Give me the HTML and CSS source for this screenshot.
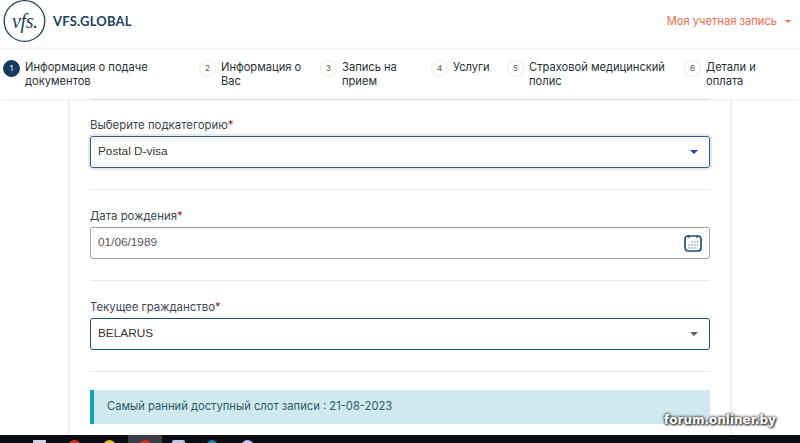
FILE: index.html
```html
<!DOCTYPE html>
<html lang="ru">
<head>
<meta charset="utf-8">
<title>VFS Global</title>
<link rel="stylesheet" href="styles.css">
</head>
<body>
<div class="viewport">
  <header class="topbar">
    <div class="brand">
      <svg class="logo" width="44" height="42" viewBox="0 0 44 42"><ellipse cx="21.5" cy="21" rx="20.3" ry="20.3" fill="none" stroke="#1d3f60" stroke-width="1.3"/></svg>
      <span class="logo-script">vfs.</span>
      <span class="brand-name">VFS.GLOBAL</span>
    </div>
    <div class="account">Моя учетная запись<i class="caret caret-orange"></i></div>
  </header>
  <nav class="stepper">
    <div class="step step1"><span class="num active">1</span><span class="lbl">Информация о подаче документов</span></div>
    <div class="step step2"><span class="num">2</span><span class="lbl">Информация о Вас</span></div>
    <div class="step step3"><span class="num">3</span><span class="lbl">Запись на прием</span></div>
    <div class="step step4"><span class="num">4</span><span class="lbl">Услуги</span></div>
    <div class="step step5"><span class="num">5</span><span class="lbl">Страховой медицинский полис</span></div>
    <div class="step step6"><span class="num">6</span><span class="lbl">Детали и оплата</span></div>
  </nav>
  <main class="card">
    <section class="field field-first">
      <label class="label">Выберите подкатегорию<b>*</b></label>
      <div class="control focused"><span class="value">Postal D-visa</span><i class="caret caret-blue"></i></div>
    </section>
    <section class="field">
      <label class="label">Дата рождения<b>*</b></label>
      <div class="control date"><span class="value">01/06/1989</span>
        <svg width="18" height="18" viewBox="0 0 18 18"><rect x="1" y="2" width="16" height="15" rx="3" fill="none" stroke="#1f4e7c" stroke-width="1.7"/><path d="M5 1v3M13 1v3" stroke="#1f4e7c" stroke-width="1.3"/><path d="M7.5 8h1M10.5 8h1M13 8h1M4.5 11h1M7.5 11h1M10.5 11h1M13 11h1M4.5 14h1M7.5 14h1M10.5 14h1" stroke="#5b7fa3" stroke-width="1.4"/></svg>
      </div>
    </section>
    <section class="field">
      <label class="label">Текущее гражданство<b>*</b></label>
      <div class="control solid"><span class="value">BELARUS</span><i class="caret caret-dark"></i></div>
    </section>
    <div class="alert">Самый ранний доступный слот записи : 21-08-2023</div>
  </main>
  <footer class="taskbar">
    <i class="tb tb1"></i><i class="tb tb2"></i><i class="tb tb3"></i><span class="tb-active"><i class="tb tb4"></i></span><i class="tb tb5"></i><i class="tb tb6"></i><i class="tb tb7"></i>
  </footer>
  <div class="watermark">forum.onliner.by</div>
</div>
</body>
</html>
```
FILE: styles.css
```css
* { box-sizing: border-box; }
html, body { margin: 0; padding: 0; background: #fff; }
.viewport { width: 800px; height: 443px; overflow: hidden; position: relative; font-family: Inter, "Noto Sans", sans-serif; color: #2a3a44; display: flex; flex-direction: column; }
.topbar { height: 49px; flex: none; display: flex; justify-content: space-between; align-items: center; padding: 0 9px 7px 3px; position: relative; }
.brand { display: flex; align-items: center; position: relative; }
.logo-script { position: absolute; left: 9px; top: 9px; font: italic 20px/24px "Liberation Serif", serif; color: #1d3f60; letter-spacing: -0.4px; }
.brand-name { margin-left: 6px; font: 700 13px/20px Lato, sans-serif; color: #1d3f60; letter-spacing: 0.2px; }
.account { font-size: 11.15px; color: #f26a4b; display: flex; align-items: center; }
.caret { display: block; width: 0; height: 0; border-left: 4px solid transparent; border-right: 4px solid transparent; border-top: 4px solid #555; }
.caret-orange { margin-left: 8px; border-top-color: #f26a4b; border-left-width: 3px; border-right-width: 3px; border-top-width: 3px; }
.caret-blue { border-top-color: #2d3fb0; }
.caret-dark { border-top-color: #555e66; }
.stepper { height: 50px; flex: none; display: flex; padding-top: 11px; font-size: 11.15px; line-height: 14px; color: #2a3034; background: #fff; box-shadow: 0 -1px 2px rgba(0,0,0,.06), 0 1px 2px rgba(0,0,0,.08); position: relative; z-index: 1; }
.step { display: flex; align-items: flex-start; flex: none; }
.step1 { width: 199px; padding-left: 3px; }
.step2 { width: 121px; }
.step3 { width: 112px; }
.step4 { width: 76px; margin-left: -1px; }
.step5 { width: 177px; }
.step6 { width: 110px; }
.num { flex: none; width: 17px; height: 17px; border-radius: 50%; border: 1px solid #e8ebee; font-size: 8px; line-height: 15px; text-align: center; color: #555; margin-right: 5px; }
.num.active { background: #163a5c; border-color: #163a5c; color: #fff; }
.lbl { display: block; }
.step1 .lbl { width: 135px; }
.step2 .lbl { width: 90px; }
.step3 .lbl { width: 70px; }
.step5 .lbl { width: 145px; }
.step6 .lbl { width: 60px; }
.card { flex: 1; margin: 0 68px; border-left: 2px solid #eef2f6; border-right: 2px solid #eef2f6; padding: 0 20px; }
.field { height: 91px; border-bottom: 1px solid #e8eaec; padding-top: 18px; }
.field-first { border-top: 1px solid #e2e4e6; padding-top: 17px; }
.label { display: block; font-size: 11.4px; line-height: 17px; color: #3a4650; margin-bottom: 2px; }
.label b { color: #9c1c2e; font-weight: 400; }
.control { height: 32px; border: 1px solid #9aa3aa; border-radius: 3px; display: flex; align-items: center; justify-content: space-between; padding: 0 11px 1px 7px; font: 11.8px "Liberation Sans", sans-serif; color: #555; }
.value { padding-bottom: 2px; }
.control.focused { border: 1px solid #2a5a8a; box-shadow: 0 0 0 2px #e3e8ee; color: #333; }
.control.solid { border-color: #1f4e7c; color: #333; }
.control.date { padding-right: 7px; }
.alert { margin-top: 18px; height: 34px; background: #d0e9ef; border-left: 4px solid #14a0bc; padding-left: 13px; font-size: 11.2px; line-height: 32px; color: #2a5a66; }
.taskbar { height: 8px; flex: none; background: #0a0d14; display: flex; position: absolute; left: 0; right: 0; bottom: 0; padding-left: 33px; overflow: hidden; }
.tb { display: block; width: 13px; height: 13px; border-radius: 50%; flex: none; margin-top: 5px; margin-right: 22px; }
.tb1 { background: #cdd6e0; border-radius: 1px; }
.tb2 { background: #d8321f; }
.tb3 { background: #e8c21a; margin-right: 12px; }
.tb-active { width: 34px; background: #3a3d44; display: flex; justify-content: center; margin-right: 10px; flex: none; }
.tb4 { background: #d8321f; margin-right: 0; }
.tb5 { background: #b9c6e6; border-radius: 2px; }
.tb6 { background: #1c7fb0; width: 10px; height: 10px; margin-right: 24px; }
.tb7 { background: #c9bdf0; }
.watermark { position: absolute; left: 664px; top: 412px; font: 700 12px/16px "DejaVu Sans", sans-serif; color: #fff; text-shadow: 0 0 3px #333, 0 0 3px #333, 1px 1px 2px #333; }
```
